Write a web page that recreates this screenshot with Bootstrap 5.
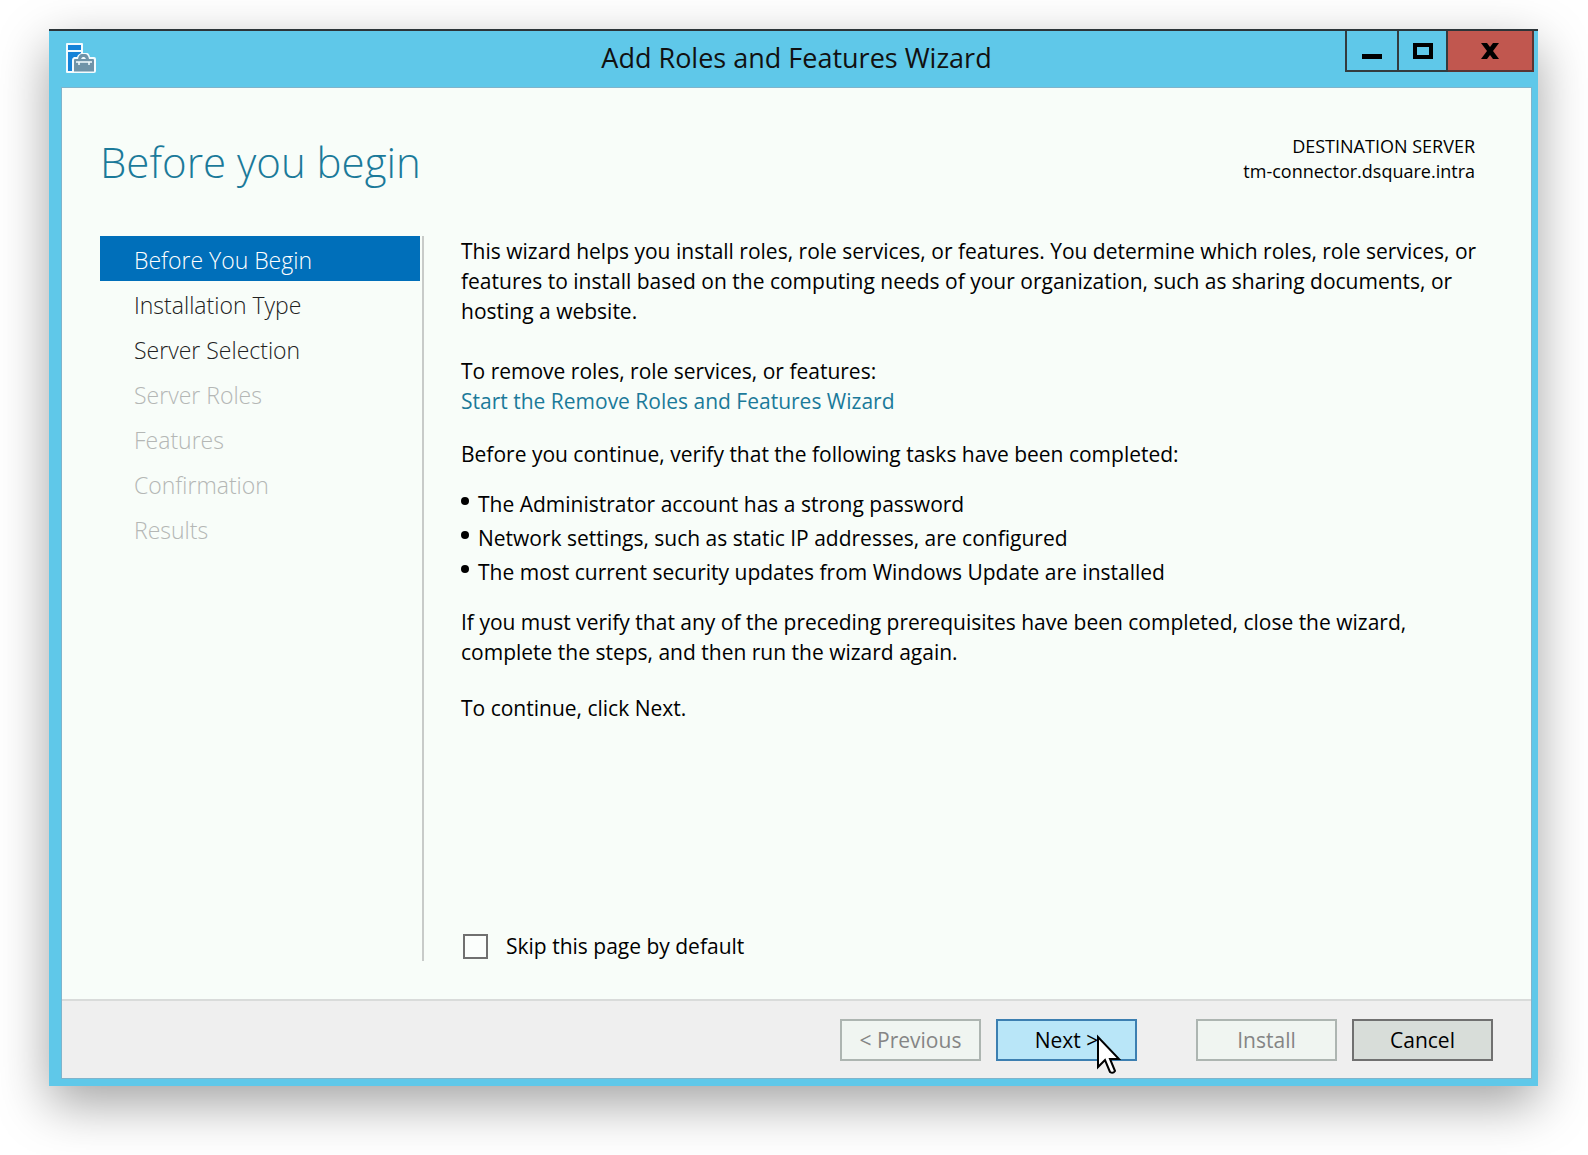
<!DOCTYPE html>
<html lang="en">
<head>
<meta charset="utf-8">
<meta name="viewport" content="width=device-width, initial-scale=1">
<title>Add Roles and Features Wizard</title>
<link href="https://cdn.jsdelivr.net/npm/bootstrap@5.3.0/dist/css/bootstrap.min.css" rel="stylesheet">
<style>
  body { font-family: "Open Sans", "Noto Sans", sans-serif; font-size: 21px; line-height: 30px; color: #000; background: #fff; padding: 29px 50px 70px 49px; }
  .wizard { background: #5fc8e9; border-top: 2px solid #2c3438; padding: 0 7px 8px 13px; min-height: calc(100vh - 98px); box-shadow: 0 18px 48px rgba(0,0,0,.36); }
  .titlebar { height: 57px; }
  .titlebar h1 { font-size: 27px; line-height: 54px; color: #111; }
  .app-icon { width: 32px; height: 32px; margin: 12px 0 0 3px; }
  .caption-box { margin-right: -3px; }
  .caption-box button { height: 41px; border: 2px solid #333b3e; border-top: 0; border-left-width: 0; background: transparent; padding: 0; width: 49px; }
  .caption-box .cap-min { width: 54px; border-left-width: 2px; }
  .caption-box .cap-close { width: 86px; background: #c1574f; border-color: #5a3432; }
  .client { background: #f8fdf9; box-shadow: 0 0 0 1px #7fb4cc; }
  .page-head { padding: 46px 56px 0 38px; }
  .page-head h2 { font-size: 42px; line-height: 56px; font-weight: 300; color: #1b7a9a; }
  .dest { font-size: 18px; line-height: 25px; }
  .page-body { padding: 46px 38px 38px; }
  .steps { width: 324px; padding-right: 2px; border-right: 2px solid #c8cbc9; }
  .steps .nav-link { color: #222; padding: 7px 34px 3px; line-height: 35px; font-weight: 300; border-radius: 0; font-size: 23px; }
  .steps .nav-link.active { background: #006fba; color: #fff; }
  .steps .nav-link.disabled { color: #b4b7b5; }
  .copy { padding-left: 37px; }
  .copy a { color: #1b7a9a; text-decoration: none; }
  .intro { margin-bottom: 30px; }
  .removal { margin-bottom: 23px; }
  .verify, .tasks { margin-bottom: 18px; }
  .rerun { margin-bottom: 26px; }
  .tasks li { padding-left: 17px; line-height: 34px; position: relative; }
  .tasks li::before { content: ""; position: absolute; left: 0; top: 10px; width: 8px; height: 8px; border-radius: 50%; background: #000; }
  .skip-row { gap: 18px; padding-left: 2px; }
  .form-check-input.skip { width: 25px; height: 25px; border: 2px solid #707070; border-radius: 0; margin: 0; background-color: #fbfefc; }
  .foot { background: #efefef; border-top: 2px solid #d9dbda; padding: 18px 38px 17px; gap: 15px; }
  .foot .btn { width: 141px; height: 42px; padding: 0; border: 2px solid #707070; border-radius: 0; background: #d8ddd9; color: #000; font-size: 21px; line-height: 38px; }
  .foot .btn:disabled { border-color: #adb5b1; background: #f0f5f1; color: #858585; opacity: 1; }
  .foot .btn.next { border-color: #3c7fb1; background: #b9e6f8; margin-right: 44px; }
  .pointer { position: absolute; left: 97px; top: 13px; width: 26px; height: 42px; }
</style>
<script src="https://cdn.jsdelivr.net/npm/bootstrap@5.3.0/dist/js/bootstrap.bundle.min.js"></script>
</head>
<body>
<main class="wizard d-flex flex-column">
  <header class="titlebar d-flex position-relative">
    <svg class="app-icon flex-shrink-0" viewBox="0 0 32 32" aria-hidden="true">
      <path d="M2 0h15q1 0 1 1v9h4q2 0 3 4h4q2 0 2 2v12q0 2-2 2H2q-1 0-1-1V1q0-1 1-1z" fill="#f4fbfe"/>
      <path d="M3 2h13v5H3zM3 9h13v1l-3 2-1 2H9q-2 1-2 3v11H3z" fill="#1583d8"/>
      <path d="M13 16q1-5 4-5h3q3 0 4 5h-3q-1-2-2-2h-1q-1 0-2 2z" fill="#6f93a8"/>
      <path d="M10 16h18q1 0 1 1v11.500H9V17q0-1 1-1z" fill="#6f93a8"/>
      <path d="M11 19h16M14 19v3M24 19v3" stroke="#f4fbfe" stroke-width="1.500" fill="none"/>
    </svg>
    <h1 class="text-center m-0 fw-normal position-absolute start-0 end-0">Add Roles and Features Wizard</h1>
    <div class="caption-box d-flex ms-auto position-relative align-self-start">
      <button type="button" class="cap-min d-flex" aria-label="Minimize"><svg class="m-auto" width="20" height="18"><path d="M0 12h20v5H0z"/></svg></button>
      <button type="button" class="d-flex" aria-label="Maximize"><svg class="m-auto" width="20" height="16"><path d="M2 2h16v12H2z" fill="none" stroke="#000" stroke-width="4"/></svg></button>
      <button type="button" class="cap-close d-flex" aria-label="Close"><svg class="m-auto" width="18" height="16"><path d="M0 0h6l3 4 3-4h6l-6 8 6 8h-6l-3-4-3 4H0l6-8z"/></svg></button>
    </div>
  </header>
  <section class="client flex-fill d-flex flex-column">
    <div class="page-head d-flex justify-content-between align-items-start">
      <h2 class="m-0">Before you begin</h2>
      <div class="dest text-end"><div>DESTINATION SERVER</div><div>tm-connector.dsquare.intra</div></div>
    </div>
    <div class="page-body d-flex flex-fill">
      <nav class="steps nav flex-column flex-nowrap flex-shrink-0" aria-label="Wizard steps">
        <a class="nav-link active" href="#" aria-current="step">Before You Begin</a>
        <a class="nav-link" href="#">Installation Type</a>
        <a class="nav-link" href="#">Server Selection</a>
        <a class="nav-link disabled" aria-disabled="true">Server Roles</a>
        <a class="nav-link disabled" aria-disabled="true">Features</a>
        <a class="nav-link disabled" aria-disabled="true">Confirmation</a>
        <a class="nav-link disabled" aria-disabled="true">Results</a>
      </nav>
      <div class="copy flex-fill d-flex flex-column">
        <p class="intro">This wizard helps you install roles, role services, or features. You determine which roles, role services, or features to install based on the computing needs of your organization, such as sharing documents, or hosting a website.</p>
        <p class="removal">To remove roles, role services, or features:<br><a href="#">Start the Remove Roles and Features Wizard</a></p>
        <p class="verify">Before you continue, verify that the following tasks have been completed:</p>
        <ul class="tasks list-unstyled">
          <li>The Administrator account has a strong password</li>
          <li>Network settings, such as static IP addresses, are configured</li>
          <li>The most current security updates from Windows Update are installed</li>
        </ul>
        <p class="rerun">If you must verify that any of the preceding prerequisites have been completed, close the wizard, complete the steps, and then run the wizard again.</p>
        <p>To continue, click Next.</p>
        <div class="skip-row d-flex align-items-center mt-auto">
          <input class="form-check-input skip" type="checkbox" id="skip"><label for="skip">Skip this page by default</label>
        </div>
      </div>
    </div>
    <footer class="foot d-flex justify-content-end">
      <button type="button" class="btn" disabled>&lt; Previous</button>
      <button type="button" class="btn next position-relative">Next &gt;
        <svg class="pointer" viewBox="0 0 26 42" aria-hidden="true"><path d="M3 3v30l7-7 5 12q3 2 5-1l-5-12h9z" fill="#fff" stroke="#000" stroke-width="2"/></svg>
      </button>
      <button type="button" class="btn" disabled>Install</button>
      <button type="button" class="btn">Cancel</button>
    </footer>
  </section>
</main>
</body>
</html>
